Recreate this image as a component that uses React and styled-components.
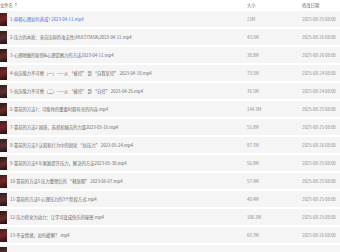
import React from 'react';
import styled, { createGlobalStyle } from 'styled-components';

const Global = createGlobalStyle`
  html, body { margin: 0; padding: 0; background: #fff; }
  body { font-family: "Noto Sans CJK SC", "Noto Sans", sans-serif; overflow: hidden; }
`

const Table = styled.div`
  width: 340px;
  height: 252px;
  overflow: hidden;
  display: flex;
  flex-direction: column;
  gap: 2px;
`

const Header = styled.div`
  display: grid;
  grid-template-columns: 247px 55px 1fr;
  height: 9px;
  line-height: 9px;
  padding-top: 1px;
  box-sizing: border-box;
  font-size: 4.3px;
  color: #666;
`

const Row = styled.div`
  display: grid;
  grid-template-columns: 247px 55px 1fr;
  height: 16px;
  flex-shrink: 0;
  align-items: center;
  background: #f5f5f5;
  font-size: 4.3px;
  color: #777;
`

const NameCell = styled.div`
  display: flex;
  align-items: center;
  gap: 3px;
  color: ${props => props.active ? '#3d6fd8' : '#6a6a6a'};
  white-space: nowrap;
`

const Thumb = styled.div`
  width: 7px;
  height: 13px;
  flex-shrink: 0;
  background: ${props => props.bg};
`

const Cell = styled.div`
  white-space: nowrap;
  color: #8a8a8a;
`

const thumbs = [
  'linear-gradient(160deg, #3a1d1d 0%, #7a2424 45%, #1d1212 100%)',
  'linear-gradient(170deg, #2b2020 0%, #5e3030 50%, #1a1414 100%)',
  'linear-gradient(160deg, #241a1a 0%, #6a2a2a 55%, #161010 100%)',
]

const files = [
  ['1-抑郁心理如何养成? 2023-04-11.mp4', '21M', '2025-08-25 08:00'],
  ['2-压力的本质：来自压抑的攻击性(MULTITASK)2023-04-11.mp4', '43.5M', '2025-08-26 08:00'],
  ['3-心理地图的原则&心理觉察力的方法2023-04-11.mp4', '38.8M', '2025-08-26 08:00'],
  ['4-抗压能力不可替（一）——从 “被控” 到 “自我掌控” 2023-04-18.mp4', '73.5M', '2025-08-24 08:00'],
  ['5-抗压能力不可替（二）——从 “被控” 到 “自控” 2023-04-25.mp4', '76.5M', '2025-08-24 08:00'],
  ['6-靠前的方法1：可能你的重要时期有关的内容.mp4', '144.3M', '2025-08-25 08:00'],
  ['7-靠前的方法2 困境，选择和痛苦的力量2023-05-16.mp4', '55.8M', '2025-08-25 08:00'],
  ['8-靠前的方法3 认知和行为中的固化 “抗压力” 2023-05-24.mp4', '87.7M', '2025-08-26 08:00'],
  ['9-靠前的方法4 8/家庭提升压力，解决的方法2023-05-30.mp4', '56.8M', '2025-08-25 08:00'],
  ['10-靠前的方法5 压力重塑后的 “释放期” 2023-06-07.mp4', '57.4M', '2025-08-25 08:00'],
  ['11-靠前的方法6 心理压力的3个阶段方式.mp4', '40.4M', '2025-08-25 08:00'],
  ['12-压力转化为动力：让学习变成快乐的秘密.mp4', '106.3M', '2025-08-25 08:00'],
  ['13-不安情绪，如何缓解？.mp4', '69.7M', '2025-08-26 08:00'],
  ['', '', ''],
]

export default function App() {
  return (
    <>
      <Global />
      <Table>
        <Header>
          <div>文件名 ↑</div>
          <div>大小</div>
          <div>修改日期</div>
        </Header>
        {files.map((f, i) => (
          <Row key={i}>
            <NameCell active={i === 0}>
              <Thumb bg={thumbs[i % thumbs.length]} />
              {f[0]}
            </NameCell>
            <Cell>{f[1]}</Cell>
            <Cell>{f[2]}</Cell>
          </Row>
        ))}
      </Table>
    </>
  );
}
